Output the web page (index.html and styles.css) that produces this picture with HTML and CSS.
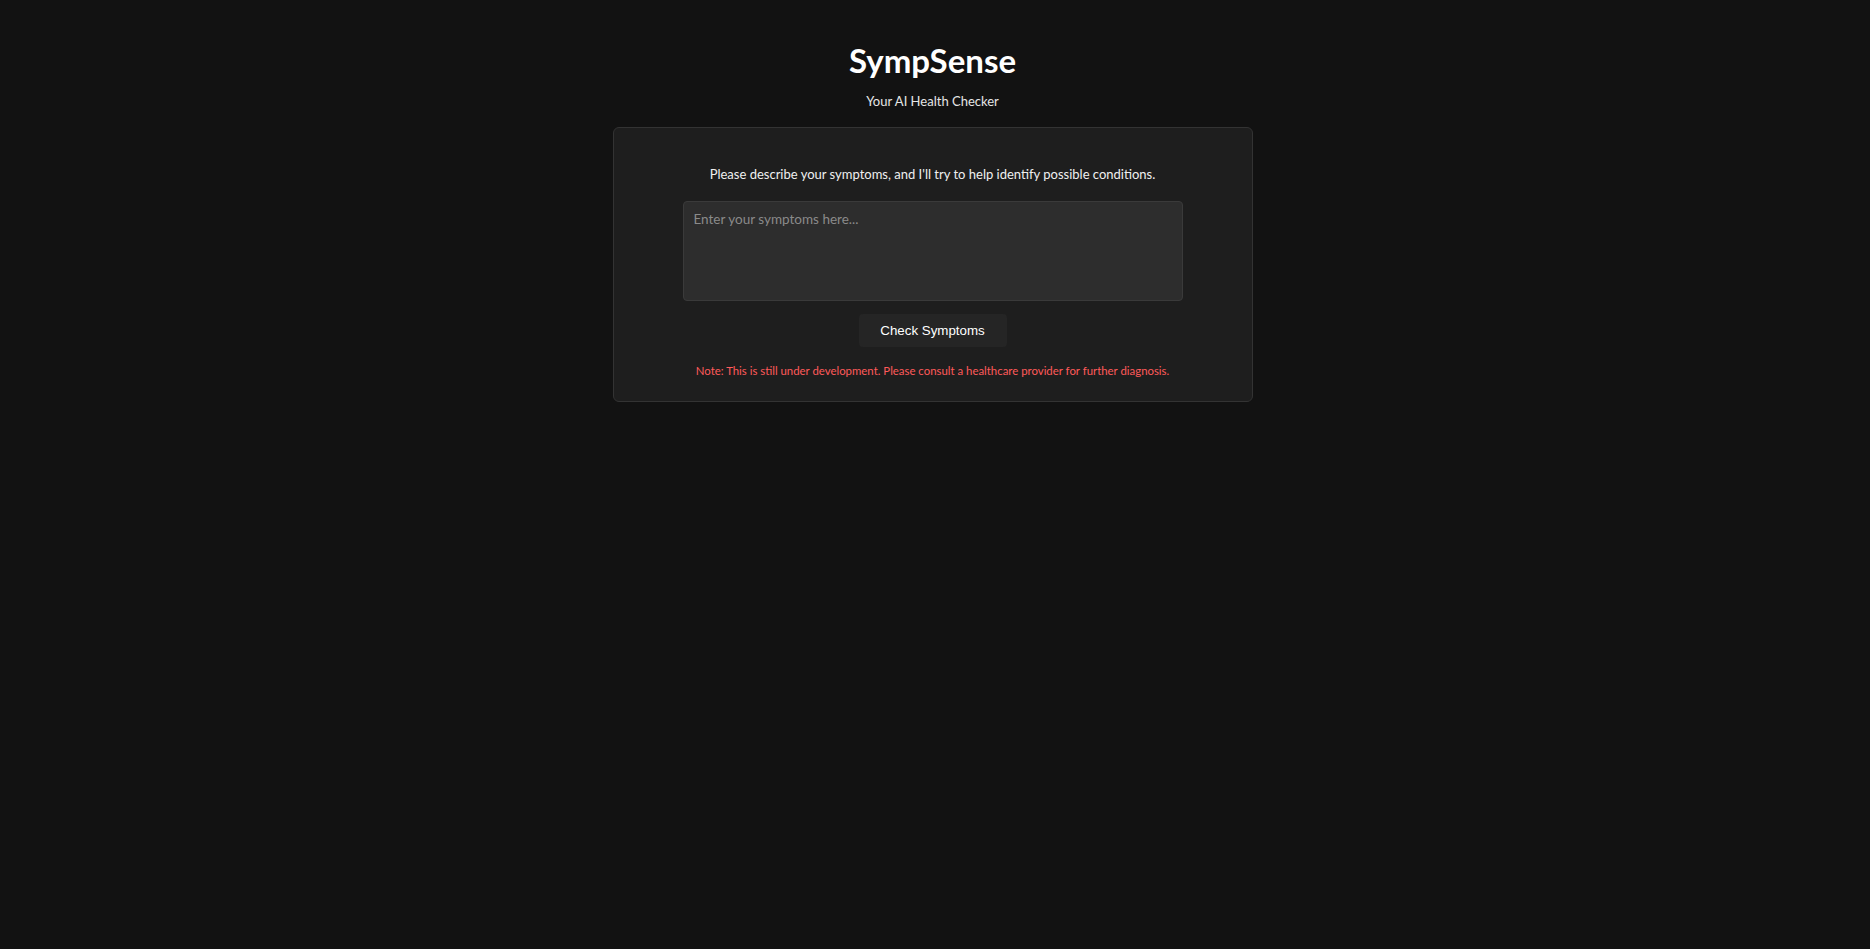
FILE: index.html
```html
<!DOCTYPE html>
<html lang="en">
<head>
<meta charset="utf-8">
<title>SympSense</title>
<link rel="stylesheet" href="styles.css">
</head>
<body>
<main class="page">
  <header class="header">
    <h1 class="title">SympSense</h1>
    <p class="subtitle">Your AI Health Checker</p>
  </header>
  <section class="card">
    <p class="intro">Please describe your symptoms, and I'll try to help identify possible conditions.</p>
    <textarea class="symptoms" placeholder="Enter your symptoms here..."></textarea>
    <button class="check-btn" type="button">Check Symptoms</button>
    <p class="note">Note: This is still under development. Please consult a healthcare provider for further diagnosis.</p>
  </section>
</main>
</body>
</html>
```

FILE: styles.css
```css
* { box-sizing: border-box; }

html, body {
  margin: 0;
  padding: 0;
  background: #121212;
  color: #ffffff;
  font-family: "Lato", "Segoe UI", sans-serif;
}

.page {
  display: flex;
  flex-direction: column;
  align-items: center;
  padding-top: 39px;
  padding-right: 5px;
}

.header {
  display: flex;
  flex-direction: column;
  align-items: center;
}

.title {
  margin: 0;
  font-size: 33px;
  line-height: 42px;
  font-weight: 700;
  color: #ffffff;
}

.subtitle {
  margin: 11px 0 0;
  font-size: 13px;
  line-height: 18px;
  color: #e6e6e6;
}

.card {
  margin-top: 17px;
  width: 640px;
  background: #1e1e1e;
  border: 1px solid #333333;
  border-radius: 6px;
  padding: 37px 20px 23px;
  display: flex;
  flex-direction: column;
  align-items: center;
}

.intro {
  margin: 0;
  font-size: 13px;
  line-height: 19px;
  color: #f0f0f0;
}

.symptoms {
  margin-top: 17px;
  width: 500px;
  height: 100px;
  background: #2d2d2d;
  border: 1px solid #3a3a3a;
  border-radius: 4px;
  padding: 8px 10px;
  color: #ffffff;
  font-family: "Lato", "Segoe UI", sans-serif;
  font-size: 13.5px;
  line-height: 18px;
  resize: none;
  outline: none;
}

.symptoms::placeholder {
  color: #8a8a8a;
}

.check-btn {
  margin-top: 13px;
  width: 148px;
  height: 33px;
  background: #252525;
  border: none;
  border-radius: 4px;
  color: #ffffff;
  font-family: "Liberation Sans", Arial, sans-serif;
  font-size: 13.33px;
  cursor: pointer;
}

.note {
  margin: 16px 0 0;
  font-size: 11.4px;
  line-height: 15px;
  color: #ff5a5a;
}
```
